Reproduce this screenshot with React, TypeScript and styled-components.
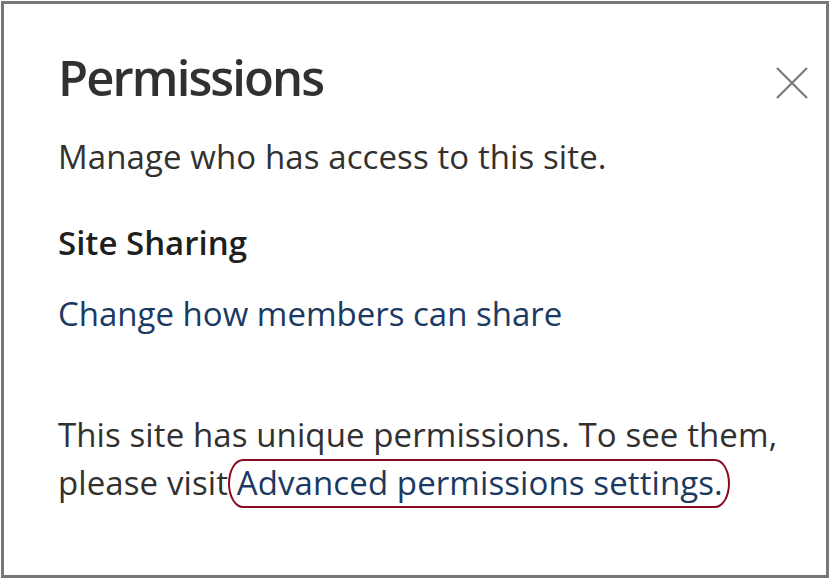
import React from "react";
import styled, { createGlobalStyle } from "styled-components";

const Global = createGlobalStyle`
  html, body { margin: 0; padding: 0; background: #ffffff; }
  body { font-family: "Open Sans", "Noto Sans", sans-serif; }
  * { box-sizing: border-box; }
`;

const Frame = styled.div`
  width: 828px;
  height: 577px;
  margin: 1px 0 0 1px;
  border: 3px solid #767676;
  background: #ffffff;
  padding: 0 18px 0 54px;
  display: flex;
  flex-direction: column;
`;

const Header = styled.div`
  display: flex;
  align-items: flex-start;
  justify-content: space-between;
`;

const Title = styled.h1`
  margin: 39px 0 0 0;
  font-size: 49px;
  line-height: 68px;
  font-weight: 600;
  color: #323130;
  letter-spacing: -1.9px;
`;

const CloseButton = styled.button`
  margin-top: 63px;
  width: 32px;
  height: 32px;
  padding: 0;
  border: none;
  background: transparent;
  display: flex;
  align-items: center;
  justify-content: center;
  cursor: pointer;
`;

const Text = styled.p<{ $gap: number }>`
  margin: ${(p) => p.$gap}px 0 0 0;
  font-size: 33px;
  line-height: 50px;
  color: #323130;
  letter-spacing: 0.1px;
`;

const Subheading = styled.h2`
  margin: 36px 0 0 0;
  font-size: 33px;
  line-height: 50px;
  font-weight: 600;
  color: #201f1e;
  letter-spacing: 0;
`;

const Link = styled.a`
  color: #1b3a62;
  text-decoration: none;
  cursor: pointer;
`;

const BlockLink = styled(Link)`
  display: block;
  margin-top: 21px;
  font-size: 33px;
  line-height: 50px;
  letter-spacing: 0;
`;

const Circled = styled(Link)`
  position: relative;
  &::after {
    content: "";
    position: absolute;
    left: -9px;
    right: -7px;
    top: -1px;
    bottom: -3px;
    border: 2px solid #8a0a1f;
    border-radius: 15px / 50%;
    pointer-events: none;
  }
`;

const Paragraph = styled.p`
  margin: 72px 0 0 0;
  font-size: 33px;
  line-height: 48px;
  color: #323130;
  letter-spacing: 0.1px;
  max-width: 750px;
`;

export default function App() {
  return (
    <>
      <Global />
      <Frame>
        <Header>
          <Title>Permissions</Title>
          <CloseButton aria-label="Close">
            <svg width="32" height="32" viewBox="0 0 32 32">
              <path d="M1 1 L31 31 M31 1 L1 31" stroke="#7a7a7a" strokeWidth="2.2" fill="none" />
            </svg>
          </CloseButton>
        </Header>
        <Text $gap={21}>Manage who has access to this site.</Text>
        <Subheading>Site Sharing</Subheading>
        <BlockLink>Change how members can share</BlockLink>
        <Paragraph>
          This site has unique permissions. To see them, please visit{" "}
          <Circled>Advanced permissions settings.</Circled>
        </Paragraph>
      </Frame>
    </>
  );
}
